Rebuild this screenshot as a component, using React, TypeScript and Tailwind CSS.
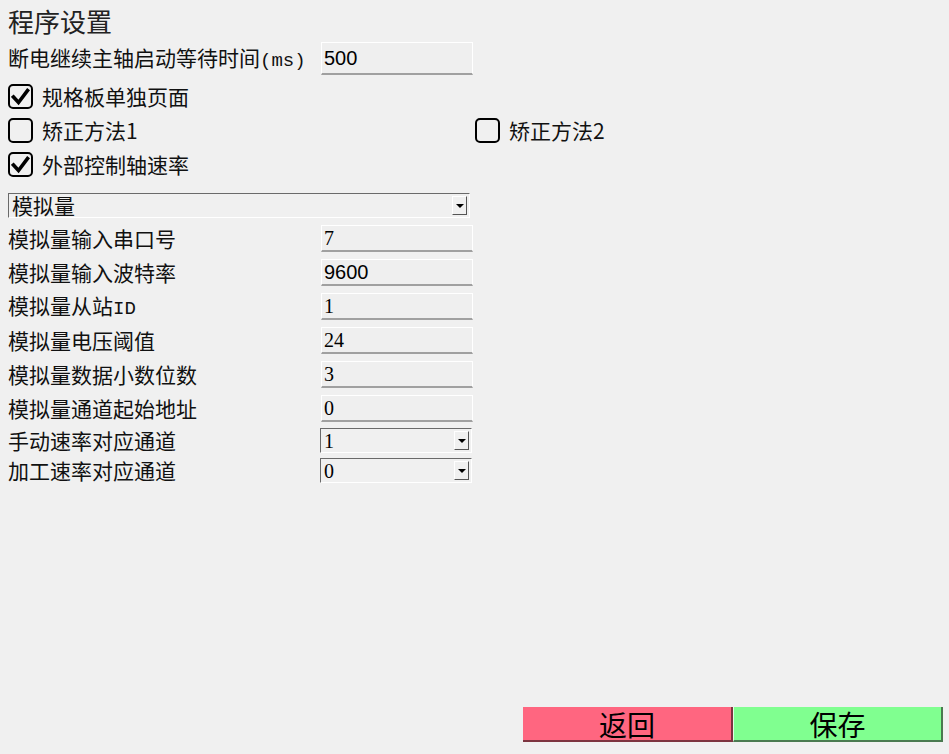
import React from 'react'

const cjk = { fontFamily: '"Noto Sans CJK SC", "Noto Sans", sans-serif' }
const mono = { fontFamily: '"Liberation Mono", "Noto Sans CJK SC", monospace' }

const fields = [
    { label: '模拟量输入串口号', value: '7', serif: true },
    { label: '模拟量输入波特率', value: '9600', serif: false },
    { label: '模拟量从站', suffix: 'ID', value: '1', serif: true },
    { label: '模拟量电压阈值', value: '24', serif: true },
    { label: '模拟量数据小数位数', value: '3', serif: true },
    { label: '模拟量通道起始地址', value: '0', serif: true },
]

function classNames(...classes: (string | false | undefined)[]) {
    return classes.filter(Boolean).join(' ')
}

const CheckBox = ({ checked, label }: { checked: boolean; label: string }) => (
    <div className="flex items-center h-[34px]">
        <div className="w-[25px] h-[25px] border-[2.5px] border-black rounded-[5px] flex items-center justify-center bg-[#f0f0f0]">
            {checked && (
                <svg width="19" height="19" viewBox="0 0 19 19">
                    <polyline points="2.5,10 7.5,15.5 16.5,3.5" fill="none" stroke="black" strokeWidth="3.6" strokeLinecap="square" />
                </svg>
            )}
        </div>
        <span className="ml-[9px] text-[21px] leading-none text-[#111]" style={cjk}>{label}</span>
    </div>
)

const Arrow = ({ h }: { h: string }) => (
    <div className={classNames('w-[15px] flex items-center justify-center bg-[#f0f0f0] border-t border-l border-white border-b border-r border-b-[#555] border-r-[#555]', h)}>
        <div className="w-0 h-0 border-l-[4px] border-r-[4px] border-t-[4px] border-l-transparent border-r-transparent border-t-black" />
    </div>
)

const TextBox = ({ value, serif }: { value: string; serif: boolean }) => (
    <div className="w-[152px] h-[27px] flex items-center px-[2px] bg-[#efefef] border-t border-l border-r border-white border-b-[2px] border-b-[#a0a0a0]">
        <span
            className="text-[20px] leading-none text-black"
            style={{ fontFamily: serif ? '"Liberation Serif", serif' : '"Liberation Sans", sans-serif' }}
        >
            {value}
        </span>
    </div>
)

const Select = ({ value }: { value: string }) => (
    <div className="w-[152px] h-[25px] flex items-center justify-between pl-[3px] pr-[2px] bg-[#f0f0f0] border-t border-l border-[#6a6a6a] border-b border-r border-b-white border-r-white">
        <span className="text-[20px] leading-none" style={{ fontFamily: '"Liberation Serif", serif' }}>{value}</span>
        <Arrow h="h-[19px]" />
    </div>
)

export default function App() {
    return (
        <div className="w-[949px] h-[754px] bg-[#f0f0f0] flex flex-col text-black overflow-hidden" style={cjk}>
            <div className="h-[42px] flex items-center pl-[8px]">
                <h1 className="text-[26px] leading-none text-[#222]">程序设置</h1>
            </div>

            <div className="flex items-center h-[33px] pl-[8px]">
                <span className="w-[313px] text-[21px] leading-none text-[#111]">
                    断电继续主轴启动等待时间<span className="text-[19px]" style={mono}>(ms)</span>
                </span>
                <div className="w-[152px] h-[33px] flex items-center px-[2px] bg-[#efefef] border-t border-l border-r border-white border-b-[2px] border-b-[#a0a0a0]">
                    <span className="text-[20px] leading-none" style={{ fontFamily: '"Liberation Sans", sans-serif' }}>500</span>
                </div>
            </div>

            <div className="flex flex-col pl-[8px] mt-[4px]">
                <CheckBox checked label="规格板单独页面" />
                <div className="flex">
                    <div className="w-[467px]">
                        <CheckBox checked={false} label="矫正方法1" />
                    </div>
                    <CheckBox checked={false} label="矫正方法2" />
                </div>
                <CheckBox checked label="外部控制轴速率" />
            </div>

            <div className="pl-[8px] mt-[12px]">
                <div className="w-[462px] h-[25px] flex items-center justify-between pl-[3px] pr-[2px] bg-[#f0f0f0] border-t border-l border-[#6a6a6a] border-b border-r border-b-white border-r-white">
                    <span className="text-[21px] leading-none text-[#111]">模拟量</span>
                    <Arrow h="h-[19px]" />
                </div>
            </div>

            <div className="flex flex-col gap-[7px] pl-[8px] mt-[7px]">
                {fields.map((f) => (
                    <div key={f.label} className="flex items-center h-[27px]">
                        <span className="w-[313px] text-[21px] leading-none text-[#111]">
                            {f.label}
                            {f.suffix && <span className="text-[19px]" style={mono}>{f.suffix}</span>}
                        </span>
                        <TextBox value={f.value} serif={f.serif} />
                    </div>
                ))}
            </div>

            <div className="flex flex-col gap-[5px] pl-[8px] mt-[6px]">
                <div className="flex items-center h-[25px]">
                    <span className="w-[312px] text-[21px] leading-none text-[#111]">手动速率对应通道</span>
                    <Select value="1" />
                </div>
                <div className="flex items-center h-[25px]">
                    <span className="w-[312px] text-[21px] leading-none text-[#111]">加工速率对应通道</span>
                    <Select value="0" />
                </div>
            </div>

            <div className="flex-1" />

            <div className="flex justify-end pr-[6px] pb-[12px]">
                <button className="w-[210px] h-[35px] bg-[#ff6680] border-r-[2px] border-b-[2px] border-[#7d3440] text-[28px] leading-none text-black flex items-center justify-center">
                    返回
                </button>
                <button className="w-[210px] h-[35px] bg-[#80ff90] border-l border-l-[#e0ffe4] border-r-[2px] border-b-[2px] border-r-[#4a7a50] border-b-[#4a7a50] text-[28px] leading-none text-black flex items-center justify-center">
                    保存
                </button>
            </div>
        </div>
    )
}
